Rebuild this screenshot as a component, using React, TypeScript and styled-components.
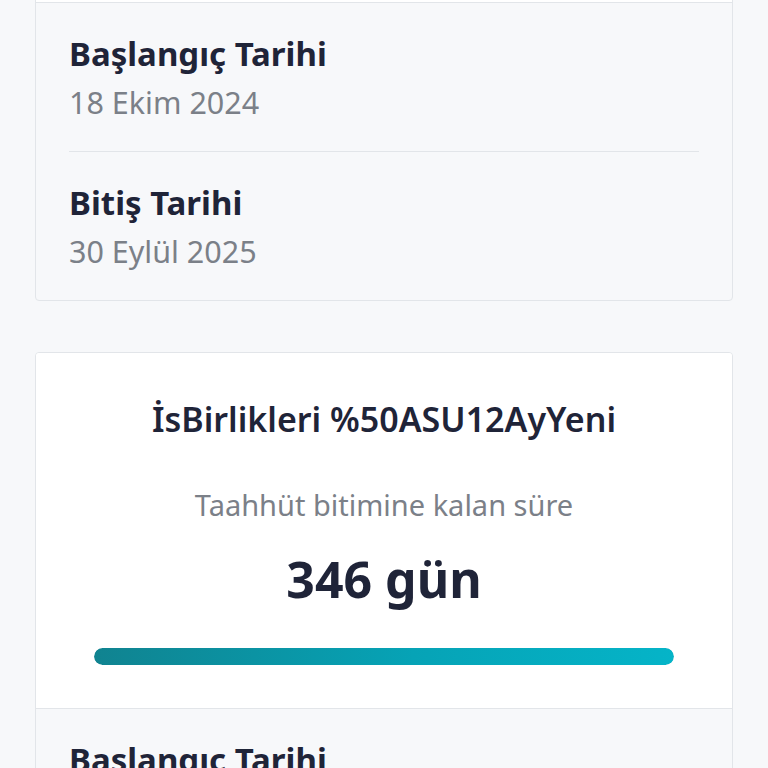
import React, { useLayoutEffect, useRef } from 'react';
import styled, { createGlobalStyle } from 'styled-components';

const GlobalStyle = createGlobalStyle`
  html, body {
    margin: 0;
    padding: 0;
    background: #f7f8fa;
    font-family: 'Noto Sans', Lato, sans-serif;
  }
  * { box-sizing: border-box; }
`;

const Viewport = styled.div`
  height: 100vh;
  overflow-y: auto;
  scrollbar-width: none;
  &::-webkit-scrollbar { display: none; }
`;

const List = styled.div`
  display: flex;
  flex-direction: column;
  gap: 51px;
  padding: 35px 35px 60px;
`;

const Card = styled.section`
  background: #f7f8fa;
  border: 1px solid #e2e5e9;
  border-radius: 4px;
  overflow: hidden;
`;

const Summary = styled.div`
  background: #ffffff;
  display: flex;
  flex-direction: column;
  align-items: center;
  padding: 45px 58px 43px;
  border-bottom: 1px solid #e2e5e9;
`;

const PlanName = styled.h2`
  margin: 0;
  font-size: 34px;
  line-height: 42px;
  font-weight: 600;
  color: #1f2438;
  white-space: nowrap;
`;

const Remaining = styled.p`
  margin: 45px 0 0;
  font-size: 29px;
  line-height: 40px;
  color: #7b8088;
`;

const Days = styled.div`
  margin-top: 24px;
  font-size: 50px;
  line-height: 60px;
  font-weight: 700;
  color: #1f2438;
`;

const Track = styled.div`
  margin-top: 39px;
  width: 100%;
  height: 17px;
  border-radius: 9px;
  background: #e6eaee;
  overflow: hidden;
`;

const Fill = styled.div`
  height: 100%;
  border-radius: 9px;
  background: linear-gradient(90deg, #108390 0%, #06a3b6 55%, #05b4c8 100%);
`;

const Details = styled.div`
  padding: 0 33px;
`;

const DateRow = styled.div`
  padding: 29px 0 27px;
  display: flex;
  flex-direction: column;
  gap: 4px;

  & + & {
    border-top: 1px solid #e2e5e9;
  }
`;

const Label = styled.div`
  font-size: 33px;
  line-height: 44px;
  font-weight: 700;
  color: #1f2438;
`;

const Value = styled.div`
  font-size: 30.5px;
  line-height: 44px;
  color: #7b8088;
`;

type Plan = {
  name: string;
  days: number;
  progress: number;
  start: string;
  end: string;
};

const plans: Plan[] = [
  { name: 'İsBirlikleri %50ASU12AyYeni', days: 346, progress: 100, start: '18 Ekim 2024', end: '30 Eylül 2025' },
  { name: 'İsBirlikleri %50ASU12AyYeni', days: 346, progress: 100, start: '18 Ekim 2024', end: '30 Eylül 2025' },
];

const PlanCard = React.forwardRef<HTMLDivElement, { plan: Plan }>(({ plan }, ref) => (
  <Card>
    <Summary>
      <PlanName>{plan.name}</PlanName>
      <Remaining>Taahhüt bitimine kalan süre</Remaining>
      <Days>{plan.days} gün</Days>
      <Track>
        <Fill style={{ width: `${plan.progress}%` }} />
      </Track>
    </Summary>
    <Details ref={ref}>
      <DateRow>
        <Label>Başlangıç Tarihi</Label>
        <Value>{plan.start}</Value>
      </DateRow>
      <DateRow>
        <Label>Bitiş Tarihi</Label>
        <Value>{plan.end}</Value>
      </DateRow>
    </Details>
  </Card>
));

export default function App() {
  const viewRef = useRef<HTMLDivElement>(null);
  const firstDetails = useRef<HTMLDivElement>(null);

  // the reference shows the list scrolled so the first card's dates sit at the top
  useLayoutEffect(() => {
    const view = viewRef.current;
    const details = firstDetails.current;
    if (view && details) {
      view.scrollTop = details.getBoundingClientRect().top - view.getBoundingClientRect().top - 3;
    }
  }, []);

  return (
    <>
      <GlobalStyle />
      <Viewport ref={viewRef}>
        <List>
          {plans.map((plan, i) => (
            <PlanCard key={i} plan={plan} ref={i === 0 ? firstDetails : undefined} />
          ))}
        </List>
      </Viewport>
    </>
  );
}
